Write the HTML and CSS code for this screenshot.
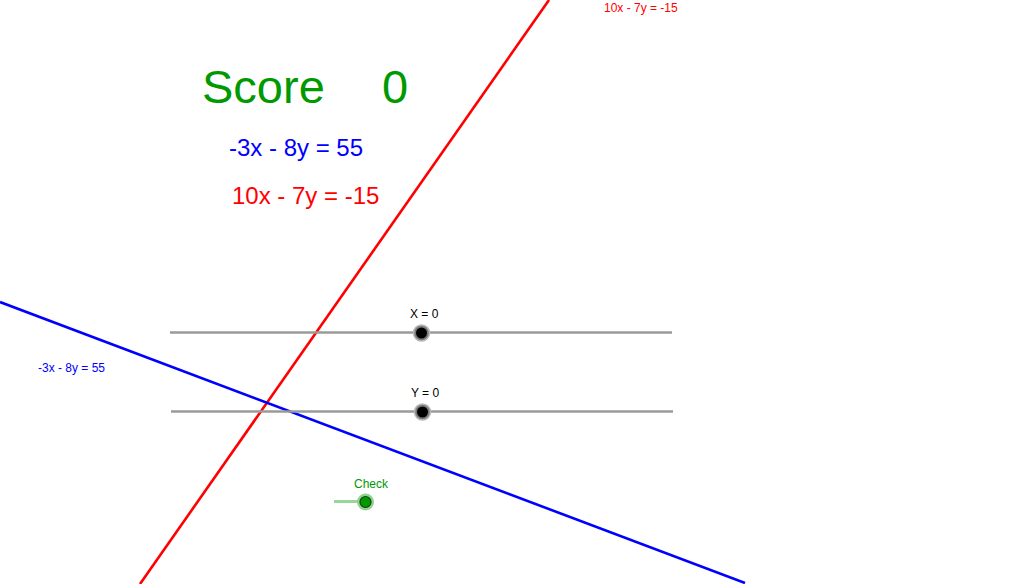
FILE: index.html
```html
<!DOCTYPE html>
<html>
<head>
<meta charset="utf-8">
<link rel="stylesheet" href="styles.css">
</head>
<body>
<div class="canvas">
<svg class="board" width="1029" height="584" viewBox="0 0 1029 584" xmlns="http://www.w3.org/2000/svg">
  <line class="red-line" x1="549" y1="0" x2="140" y2="584"/>
  <line class="blue-line" x1="0" y1="302" x2="745" y2="583"/>

  <text class="score" x="202" y="103">Score</text>
  <text class="score" x="382" y="103">0</text>
  <text class="eq-blue" x="229" y="156">-3x - 8y = 55</text>
  <text class="eq-red" x="232" y="204">10x - 7y = -15</text>

  <text class="label red" x="604" y="12">10x - 7y = -15</text>
  <text class="label blue" x="38" y="372">-3x - 8y = 55</text>

  <line class="slider" x1="170" y1="332.5" x2="672" y2="332.5"/>
  <text class="label dark" x="410" y="318">X = 0</text>
  <circle class="knob-ring" cx="421.5" cy="333" r="8"/>
  <circle class="knob" cx="421.5" cy="333" r="5.5"/>

  <line class="slider" x1="171" y1="411.5" x2="673" y2="411.5"/>
  <text class="label dark" x="411" y="397">Y = 0</text>
  <circle class="knob-ring" cx="422.5" cy="412" r="8"/>
  <circle class="knob" cx="422.5" cy="412" r="5.5"/>

  <line class="check-line" x1="334" y1="501.5" x2="365" y2="501.5"/>
  <text class="label green" x="354" y="488">Check</text>
  <circle class="check-halo" cx="365.5" cy="502" r="8.5"/>
  <circle class="check-knob" cx="365.5" cy="502" r="5.5"/>
</svg>
</div>
</body>
</html>
```
FILE: styles.css
```css
html, body {
  margin: 0;
  padding: 0;
  background: #ffffff;
  overflow: hidden;
}
.canvas {
  width: 1029px;
  height: 584px;
}
.board {
  display: block;
  font-family: "Liberation Sans", Arial, sans-serif;
}
.red-line {
  stroke: #ff0000;
  stroke-width: 2.6;
}
.blue-line {
  stroke: #0000ff;
  stroke-width: 2.6;
}
.score {
  font-size: 47px;
  fill: #009900;
}
.eq-blue {
  font-size: 24px;
  fill: #0000ff;
}
.eq-red {
  font-size: 24px;
  fill: #ff0000;
}
.label {
  font-size: 12px;
}
.label.red { fill: #ff0000; }
.label.blue { fill: #0000ff; }
.label.dark { fill: #000000; }
.label.green { fill: #009900; }
.slider {
  stroke: #9a9a9a;
  stroke-width: 2.5;
}
.knob-ring {
  fill: #7a7a7a;
  stroke: #b8b8b8;
  stroke-width: 1.5;
}
.knob {
  fill: #000000;
}
.check-line {
  stroke: #99d699;
  stroke-width: 3;
}
.check-halo {
  fill: #8fd38f;
}
.check-knob {
  fill: #009900;
  stroke: #1a3d1a;
  stroke-width: 1.2;
}
```
